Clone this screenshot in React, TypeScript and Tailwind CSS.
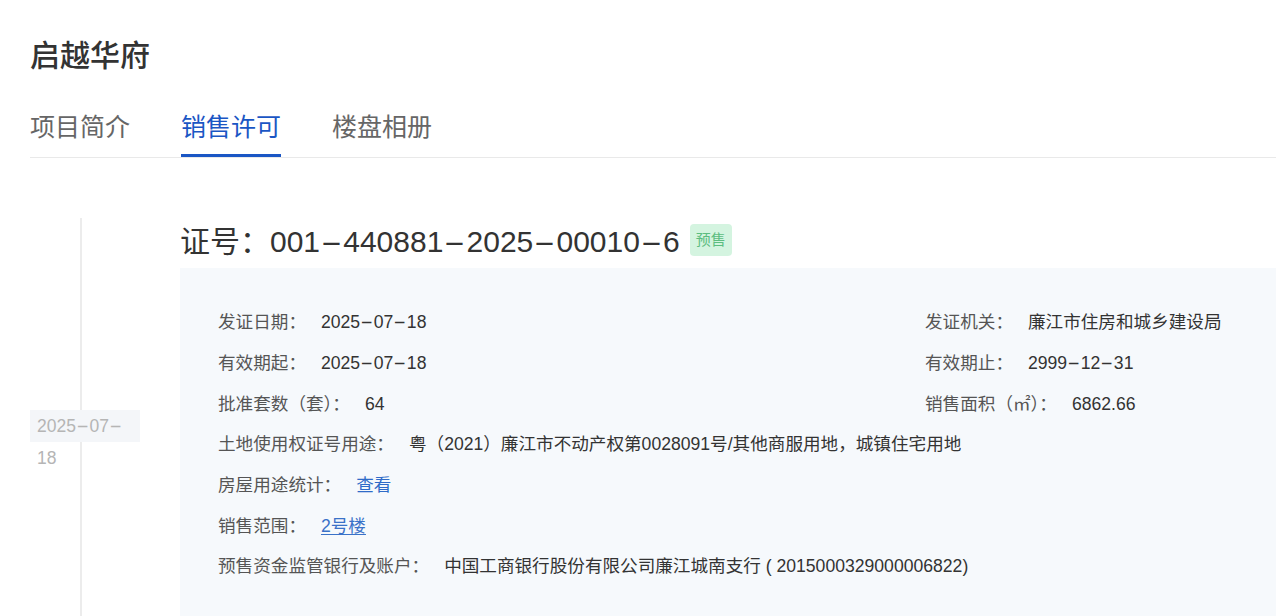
import React, { useState } from "react";

type Field = {
  label: string;
  value: React.ReactNode;
};

// the reference font draws "-" as a long dash, stretch Arial's hyphen to match
function Num({ text }: { text: string }) {
  const parts = text.split("-");
  return (
    <>
      {parts.map((p, i) => (
        <React.Fragment key={i}>
          {i > 0 && (
            <span className="inline-block scale-x-[2.2] px-[0.22em]">-</span>
          )}
          {p}
        </React.Fragment>
      ))}
    </>
  );
}

const leftFields: Field[] = [
  { label: "发证日期：", value: <Num text="2025-07-18" /> },
  { label: "有效期起：", value: <Num text="2025-07-18" /> },
  { label: "批准套数（套）：", value: "64" },
];

const rightFields: Field[] = [
  { label: "发证机关：", value: "廉江市住房和城乡建设局" },
  { label: "有效期止：", value: <Num text="2999-12-31" /> },
  { label: "销售面积（㎡）：", value: "6862.66" },
];

const tabs = ["项目简介", "销售许可", "楼盘相册"];

function InfoRow({ label, value }: Field) {
  return (
    <div className="flex h-[40.7px] items-center whitespace-nowrap">
      <span className="text-[#555]">{label}</span>
      <span className="ml-[15px] text-[#333]">{value}</span>
    </div>
  );
}

export default function App() {
  const [active, setActive] = useState(1);

  return (
    <div
      className="min-h-screen overflow-hidden bg-white pl-[30px]"
      style={{ fontFamily: '"Liberation Sans", "Noto Sans CJK SC", sans-serif' }}
    >
      <h1 className="mt-[36px] text-[30px] font-medium leading-[40px] text-[#333]">
        启越华府
      </h1>

      <div className="mt-[34px] flex gap-[51px] border-b border-[#e9e9e9]">
        {tabs.map((tab, index) => (
          <div
            key={tab}
            onClick={() => setActive(index)}
            className={`h-[47px] w-[100px] cursor-pointer border-b-[3px] pb-[10px] text-[25px] leading-[34px] ${
              index === active
                ? "border-[#1a56c4] text-[#1a56c4]"
                : "border-transparent text-[#666]"
            }`}
          >
            {tab}
          </div>
        ))}
      </div>

      <div className="mt-[60px] flex">
        <div className="relative w-[150px] shrink-0">
          <div className="ml-[50px] h-full border-l-2 border-[#ececec]"></div>
          <div className="absolute left-0 top-[192px] h-8 w-[110px] whitespace-nowrap bg-[#f4f6f9] pl-[7px] text-[17.5px] leading-8 text-[#b5b5b5]">
            <Num text="2025-07-" />
            <br />
            18
          </div>
        </div>

        <div className="flex-1">
          <div className="mt-[4px] flex items-center">
            <h2 className="text-[30px] leading-[40px] text-[#333]">
              证号：<Num text="001-440881-2025-00010-6" />
            </h2>
            <span className="mb-[4px] ml-[10px] flex h-8 w-[42px] items-center justify-center rounded-sm bg-[#d4f4e0] text-[15px] text-[#5cbd80]">
              预售
            </span>
          </div>

          <div className="mt-[6px] bg-[#f6f9fc] pb-[40px] pl-[38px] pt-[34px] text-[17.6px]">
            <div className="grid grid-cols-[707px_1fr]">
              <div>
                {leftFields.map((f) => (
                  <InfoRow key={f.label} {...f} />
                ))}
              </div>
              <div>
                {rightFields.map((f) => (
                  <InfoRow key={f.label} {...f} />
                ))}
              </div>
            </div>
            <InfoRow
              label="土地使用权证号用途："
              value="粤（2021）廉江市不动产权第0028091号/其他商服用地，城镇住宅用地"
            />
            <InfoRow
              label="房屋用途统计："
              value={<span className="cursor-pointer text-[#2f6bc8]">查看</span>}
            />
            <InfoRow
              label="销售范围："
              value={
                <span className="cursor-pointer text-[#3a72c8] underline underline-offset-2">
                  2号楼
                </span>
              }
            />
            <InfoRow
              label="预售资金监管银行及账户："
              value="中国工商银行股份有限公司廉江城南支行 ( 2015000329000006822)"
            />
          </div>
        </div>
      </div>
    </div>
  );
}
